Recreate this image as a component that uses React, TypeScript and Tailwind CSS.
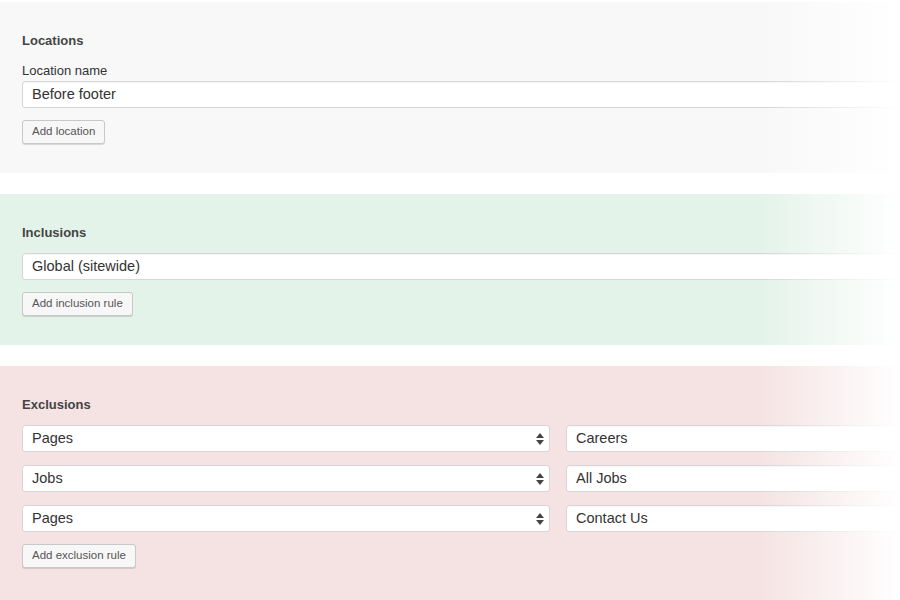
import React from 'react';

const font = { fontFamily: '"Liberation Sans", Arial, sans-serif' };

const Heading = ({ children }: { children: React.ReactNode }) => (
  <h3 className="text-[13px] font-bold leading-4 text-[#444]">{children}</h3>
);

const TextField = ({ value }: { value: string }) => (
  <div className="h-[27px] w-full rounded-[3px] border border-[#d6d6d6] bg-white pl-[9px] text-[14.5px] leading-[25px] text-[#333] shadow-[inset_0_1px_1px_rgba(0,0,0,0.04)]">
    {value}
  </div>
);

const SelectField = ({ value }: { value: string }) => (
  <div className="flex h-[27px] w-[528px] shrink-0 items-center justify-between rounded-[3px] border border-[#d6d6d6] bg-white pl-[9px] pr-[3px] text-[14.5px] text-[#333]">
    <span>{value}</span>
    <svg width="10" height="14" viewBox="0 0 10 14" className="mr-px">
      <path d="M5 1 L9 6 H1 Z" fill="#444" />
      <path d="M5 13 L9 8 H1 Z" fill="#444" />
    </svg>
  </div>
);

const SmallButton = ({ children }: { children: React.ReactNode }) => (
  <button className="h-[24px] self-start rounded-[3px] border border-[#c8c8c8] bg-[#f7f7f7] px-[9px] text-[11.5px] text-[#555] shadow-[0_1px_0_rgba(0,0,0,0.12)]">
    {children}
  </button>
);

export default function App() {
  const exclusions = [
    ['Pages', 'Careers'],
    ['Jobs', 'All Jobs'],
    ['Pages', 'Contact Us'],
  ];

  return (
    <div className="relative h-[600px] w-[900px] overflow-hidden bg-white pt-[2px]" style={font}>
      {/* Locations */}
      <section className="flex flex-col bg-[#f8f8f8] pb-[29px] pl-[22px] pt-[31px]">
        <Heading>Locations</Heading>
        <label className="mt-[14px] text-[13px] leading-4 text-[#333]">Location name</label>
        <div className="mt-[2px] w-[1000px]">
          <TextField value="Before footer" />
        </div>
        <div className="mt-[12px] flex">
          <SmallButton>Add location</SmallButton>
        </div>
      </section>

      <div className="h-[21px]" />

      {/* Inclusions */}
      <section className="flex flex-col bg-[#e4f3ea] pb-[29px] pl-[22px] pt-[31px]">
        <Heading>Inclusions</Heading>
        <div className="mt-[12px] w-[1000px]">
          <TextField value="Global (sitewide)" />
        </div>
        <div className="mt-[12px] flex">
          <SmallButton>Add inclusion rule</SmallButton>
        </div>
      </section>

      <div className="h-[21px]" />

      {/* Exclusions */}
      <section className="flex h-[300px] flex-col bg-[#f5e3e3] pl-[22px] pt-[31px]">
        <Heading>Exclusions</Heading>
        <div className="mt-[12px] flex flex-col gap-[13px]">
          {exclusions.map(([type, target], i) => (
            <div key={i} className="flex w-[1000px] gap-[16px]">
              <SelectField value={type} />
              <TextField value={target} />
            </div>
          ))}
        </div>
        <div className="mt-[12px] flex">
          <SmallButton>Add exclusion rule</SmallButton>
        </div>
      </section>

      {/* right edge fade */}
      <div className="pointer-events-none absolute right-0 top-0 h-full w-[140px] bg-gradient-to-r from-white/0 to-white" />
    </div>
  );
}
